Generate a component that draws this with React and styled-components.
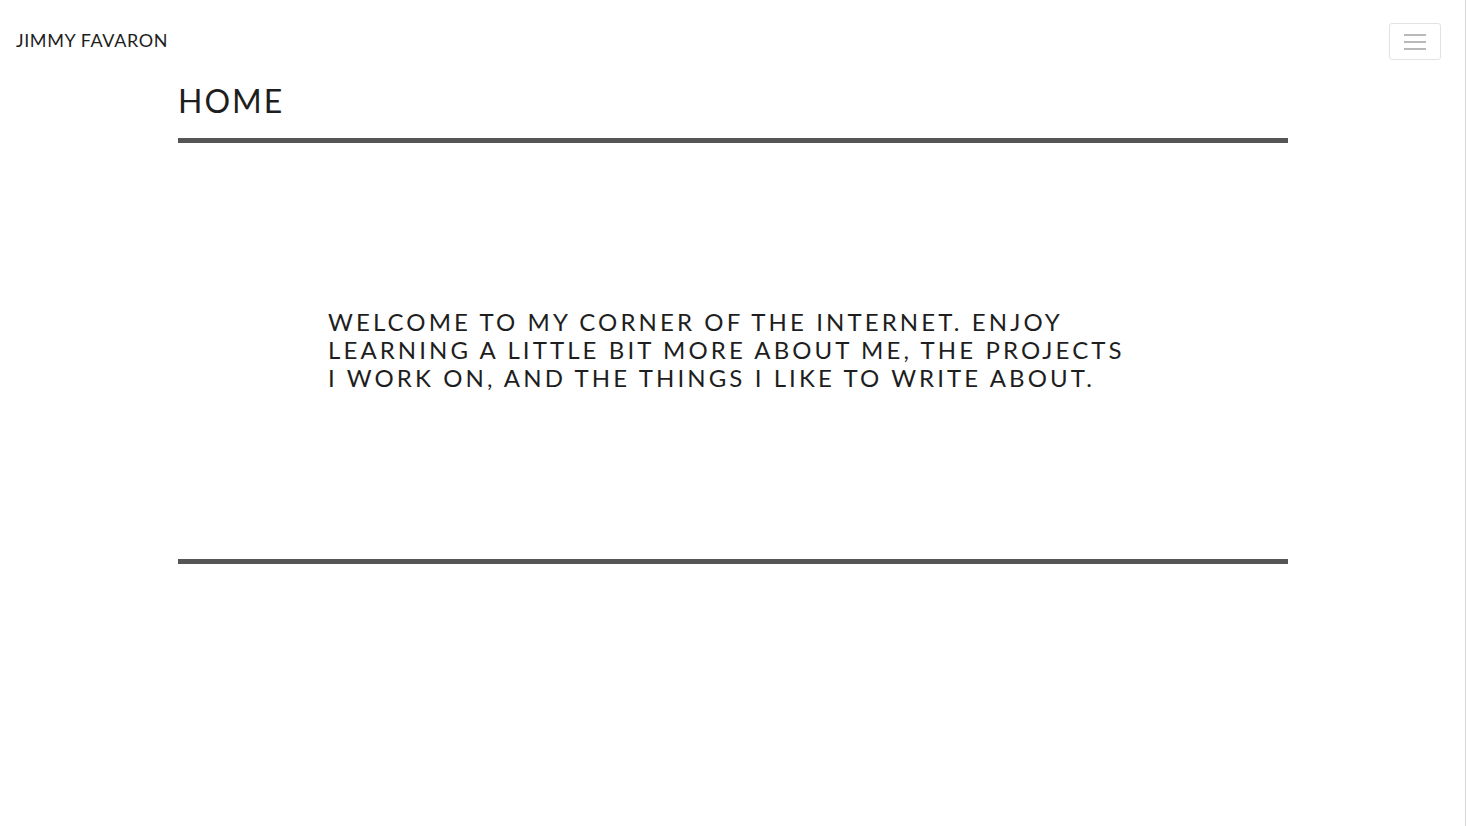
import React from 'react'
import styled, { createGlobalStyle } from 'styled-components'

const GlobalStyle = createGlobalStyle`
  html, body {
    margin: 0;
    padding: 0;
    background: #fff;
  }
  body {
    min-height: 100vh;
    box-shadow: inset -1px 0 0 #d6d6d6;
    font-family: Lato, "Open Sans", "Liberation Sans", sans-serif;
    color: #1e1e1e;
  }
`

const Navbar = styled.nav`
  display: flex;
  justify-content: space-between;
  align-items: center;
  padding: 23px 25px 0 16px;
`

const Brand = styled.a`
  margin-bottom: 4px;
  font-size: 18px;
  letter-spacing: 0.6px;
  text-transform: uppercase;
  color: #1e1e1e;
  text-decoration: none;
`

const Toggler = styled.button`
  display: flex;
  align-items: center;
  justify-content: center;
  width: 52px;
  height: 37px;
  padding: 0;
  background: transparent;
  border: 1px solid #e2e2e2;
  border-radius: 3px;
  cursor: pointer;
`

const Container = styled.main`
  width: 1110px;
  margin: 0 auto;
`

const Title = styled.h1`
  margin: 22px 0 0;
  font-size: 32px;
  font-weight: 400;
  letter-spacing: 2px;
  line-height: 38px;
  text-transform: uppercase;
`

const Rule = styled.hr`
  margin: ${props => props.top || 0}px 0 0;
  height: 5px;
  border: 0;
  background: #555;
`

const Hero = styled.section`
  display: flex;
  align-items: center;
  height: 416px;
  padding: 0 160px 0 150px;
`

const Lead = styled.p`
  margin: 0 0 2px;
  font-size: 24px;
  line-height: 28px;
  letter-spacing: 3.1px;
  text-transform: uppercase;
`

const MenuIcon = () => (
  <svg width="22" height="16" viewBox="0 0 22 16">
    <g stroke="#a8a8a8" strokeWidth="1.6">
      <line x1="0" y1="1" x2="22" y2="1" />
      <line x1="0" y1="8" x2="22" y2="8" />
      <line x1="0" y1="15" x2="22" y2="15" />
    </g>
  </svg>
)

const App = () => {
  return (
    <>
      <GlobalStyle />
      <Navbar>
        <Brand href="#">Jimmy Favaron</Brand>
        <Toggler aria-label="Toggle navigation">
          <MenuIcon />
        </Toggler>
      </Navbar>
      <Container>
        <Title>Home</Title>
        <Rule top={18} />
        <Hero>
          <Lead>
            Welcome to my corner of the internet. Enjoy learning a little bit more
            about me, the projects I work on, and the things I like to write about.
          </Lead>
        </Hero>
        <Rule />
      </Container>
    </>
  )
}

export default App
